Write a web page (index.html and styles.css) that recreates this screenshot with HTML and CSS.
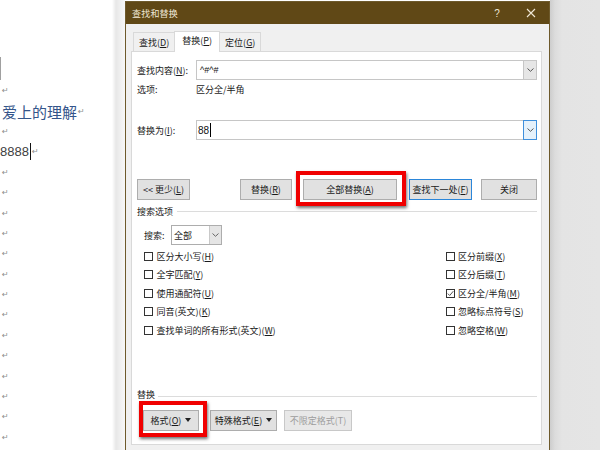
FILE: index.html
```html
<!DOCTYPE html>
<html lang="zh-CN">
<head>
<meta charset="utf-8">
<title>查找和替换</title>
<link rel="stylesheet" href="styles.css">
</head>
<body>
<div class="screen">
  <div class="doc">
    <div class="doc-bar"></div>
    <div class="doc-lines">
      <div class="line"><span class="pm">↵</span></div>
      <div class="line"><span class="kai">爱上的理解</span><span class="pm">↵</span></div>
      <div class="line"><span class="pm">↵</span></div>
      <div class="line"><span class="num">8888</span><span class="caret"></span><span class="pm">↵</span></div>
      <div class="line"><span class="pm">↵</span></div>
      <div class="line"><span class="pm">↵</span></div>
      <div class="line"><span class="pm">↵</span></div>
      <div class="line"><span class="pm">↵</span></div>
      <div class="line"><span class="pm">↵</span></div>
      <div class="line"><span class="pm">↵</span></div>
      <div class="line"><span class="pm">↵</span></div>
      <div class="line"><span class="pm">↵</span></div>
      <div class="line"><span class="pm">↵</span></div>
      <div class="line"><span class="pm">↵</span></div>
      <div class="line"><span class="pm">↵</span></div>
      <div class="line"><span class="pm">↵</span></div>
      <div class="line"><span class="pm">↵</span></div>
      <div class="line"><span class="pm">↵</span></div>
    </div>
  </div>

  <div class="dialog">
    <div class="titlebar">
      <span class="tb-title">查找和替换</span>
      <span class="tb-btn tb-help">?</span>
      <span class="tb-btn"><svg width="10" height="10" viewBox="0 0 10 10"><path d="M1 1 L9 9 M9 1 L1 9" stroke="#efe7d6" stroke-width="1.1" fill="none"/></svg></span>
    </div>
    <div class="dbody">
      <div class="tabs">
        <div class="tab">查找(<u>D</u>)</div>
        <div class="tab active">替换(<u>P</u>)</div>
        <div class="tab">定位(<u>G</u>)</div>
      </div>
      <div class="panel">
        <div class="frow">
          <span class="flabel">查找内容(<u>N</u>):</span>
          <div class="combo">
            <span class="combo-text small">^#^#</span>
            <span class="dd"><svg width="7" height="4" viewBox="0 0 7 4"><path d="M0.5 0.5 L3.5 3.3 L6.5 0.5" stroke="#555" stroke-width="1" fill="none"/></svg></span>
          </div>
        </div>
        <div class="orow">
          <span class="flabel">选项:</span>
          <span>区分全/半角</span>
        </div>
        <div class="frow rrow">
          <span class="flabel">替换为(<u>I</u>):</span>
          <div class="combo">
            <span class="combo-text">88<span class="icaret"></span></span>
            <span class="dd blue"><svg width="7" height="4" viewBox="0 0 7 4"><path d="M0.5 0.5 L3.5 3.3 L6.5 0.5" stroke="#555" stroke-width="1" fill="none"/></svg></span>
          </div>
        </div>

        <div class="brow">
          <button class="btn b-less">&lt;&lt; 更少(<u>L</u>)</button>
          <button class="btn b-rep">替换(<u>R</u>)</button>
          <button class="btn b-all mark1">全部替换(<u>A</u>)</button>
          <button class="btn b-next default">查找下一处(<u>F</u>)</button>
          <button class="btn b-close">关闭</button>
        </div>

        <div class="legend"><span>搜索选项</span><span class="lline"></span></div>

        <div class="srow">
          <span class="slabel">搜索:</span>
          <div class="select">
            <span class="select-text">全部</span>
            <span class="sdd"><svg width="7" height="4" viewBox="0 0 7 4"><path d="M0.5 0.5 L3.5 3.3 L6.5 0.5" stroke="#666" stroke-width="1" fill="none"/></svg></span>
          </div>
        </div>

        <div class="checks">
          <div class="ccol left">
            <div class="chk"><span class="box"></span>区分大小写(<u>H</u>)</div>
            <div class="chk"><span class="box"></span>全字匹配(<u>Y</u>)</div>
            <div class="chk"><span class="box"></span>使用通配符(<u>U</u>)</div>
            <div class="chk"><span class="box"></span>同音(英文)(<u>K</u>)</div>
            <div class="chk"><span class="box"></span>查找单词的所有形式(英文)(<u>W</u>)</div>
          </div>
          <div class="ccol right">
            <div class="chk"><span class="box"></span>区分前缀(<u>X</u>)</div>
            <div class="chk"><span class="box"></span>区分后缀(<u>T</u>)</div>
            <div class="chk"><span class="box"><svg width="7" height="7" viewBox="0 0 7 7"><path d="M0.8 3.6 L2.7 5.5 L6.3 1.2" stroke="#555" stroke-width="1" fill="none"/></svg></span>区分全/半角(<u>M</u>)</div>
            <div class="chk"><span class="box"></span>忽略标点符号(<u>S</u>)</div>
            <div class="chk"><span class="box"></span>忽略空格(<u>W</u>)</div>
          </div>
        </div>

        <div class="legend legend2"><span>替换</span><span class="lline"></span></div>

        <div class="brow2">
          <button class="btn b-fmt mark2">格式(<u>O</u>)<span class="tri"></span></button>
          <button class="btn b-spc">特殊格式(<u>E</u>)<span class="tri"></span></button>
          <button class="btn b-nofmt disabled">不限定格式(T)</button>
        </div>
      </div>
    </div>
  </div>

  <div class="side"></div>
</div>
</body>
</html>
```

FILE: styles.css
```css
* { box-sizing: border-box; }
html, body { margin: 0; padding: 0; }
body {
  width: 600px;
  height: 450px;
  overflow: hidden;
  background: #fff;
  font-family: "Noto Sans CJK SC", "Noto Sans", sans-serif;
}
u { text-decoration: underline; text-underline-offset: 1px; }

.screen {
  display: flex;
  width: 600px;
  height: 450px;
  overflow: hidden;
}

/* ---------- document on the left ---------- */
.doc {
  width: 125px;
  flex-shrink: 0;
  padding-top: 57px;
  background: linear-gradient(to right, #fff 0, #fff 112px, #e7e7e7 116px, #efefef 120px, #f7f7f7 125px);
}
.doc-bar { width: 1px; height: 23px; background: #a0a0a0; }
.doc-lines { margin-top: 0.5px; }
.line {
  height: 20.4px;
  display: flex;
  align-items: center;
  white-space: nowrap;
  padding-left: 1px;
}
.pm {
  font-family: "DejaVu Sans", sans-serif;
  font-size: 8px;
  color: #8c8c8c;
  padding-left: 1px;
}
.kai {
  font-family: "Noto Sans CJK SC", serif;
  font-size: 15px;
  font-weight: 400;
  color: #34558a;
  margin-left: 1px;
}
.num {
  font-family: "Liberation Sans", sans-serif;
  font-size: 13px;
  color: #404040;
  margin-left: -1px;
}
.caret { width: 1px; height: 17px; background: #111; margin-left: 1px; }

/* ---------- dialog ---------- */
.dialog {
  width: 425px;
  flex-shrink: 0;
  height: 470px;
  margin-top: 1px;
  border: 1px solid #6e5a2c;
  border-bottom: none;
  background: #f0f0f0;
  display: flex;
  flex-direction: column;
}
.titlebar {
  height: 22px;
  flex-shrink: 0;
  background: #604816;
  color: #efe7d6;
  display: flex;
  align-items: center;
  padding-left: 6px;
  padding-right: 1px;
  font-size: 9px;
}
.tb-title { flex: 1; letter-spacing: 0.2px; }
.tb-btn {
  width: 34px;
  height: 22px;
  display: flex;
  align-items: center;
  justify-content: center;
}
.tb-help { font-family: "Liberation Sans", sans-serif; font-size: 10px; }

.dbody {
  padding: 7px 7px 0 5px;
  font-size: 9px;
  color: #1a1a1a;
}

.tabs {
  display: flex;
  align-items: flex-end;
  height: 20px;
  margin-left: 2px;
}
.tab {
  height: 19px;
  padding: 3px 5px 0;
  border: 1px solid #d9d9d9;
  border-bottom: none;
  background: #f0f0f0;
  white-space: nowrap;
  margin-right: -1px;
}
.tab.active {
  height: 21px;
  margin-bottom: -1px;
  padding: 2px 7px 0;
  background: #fff;
  position: relative;
  z-index: 1;
}

.panel {
  border: 1px solid #d9d9d9;
  background: #fff;
  padding: 8px 4px 13px 5px;
}

.frow { display: flex; align-items: center; height: 20px; }
.rrow { margin-top: 22px; }
.flabel { width: 59px; flex-shrink: 0; white-space: nowrap; }
.orow { display: flex; align-items: center; height: 18px; }

.combo {
  flex: 1;
  height: 20px;
  border: 1px solid #c6c6c6;
  display: flex;
  align-items: stretch;
}
.combo-text {
  flex: 1;
  display: flex;
  align-items: center;
  padding-left: 1px;
  font-family: "Liberation Sans", sans-serif;
  font-size: 10px;
  color: #111;
}
.combo-text.small { font-size: 9px; padding-left: 3px; }
.icaret { width: 1px; height: 14px; background: #000; margin-left: 1px; }
.dd {
  width: 14px;
  margin: -1px -1px -1px 0;
  border: 1px solid #c6c6c6;
  background: #e6e6e6;
  display: flex;
  align-items: center;
  justify-content: center;
}
.dd.blue { border-color: #3f8fdc; background: #e5f1fb; }

/* buttons */
.btn {
  height: 21px;
  flex-shrink: 0;
  border: 1px solid #adadad;
  background: #e1e1e1;
  font-family: "Noto Sans CJK SC", sans-serif;
  font-size: 9px;
  color: #1a1a1a;
  padding: 0;
  display: flex;
  align-items: center;
  justify-content: center;
  white-space: nowrap;
}
.btn.default { border-color: #2b86d9; }
.btn.disabled { color: #9d9d9d; border-color: #c8c8c8; background: #e8e8e8; }

.brow { display: flex; margin-top: 39px; }
.b-less { width: 53px; }
.b-rep { width: 52px; margin-left: 50px; }
.b-all { width: 94px; margin-left: 11px; }
.b-next { width: 63px; margin-left: 12px; }
.b-close { width: 56px; margin-left: 9px; }

.mark1, .mark2 { position: relative; }
.mark1::after, .mark2::after {
  content: "";
  position: absolute;
  border: 4px solid #f00000;
  box-shadow: 1px 2px 3px rgba(0, 0, 0, 0.55);
  pointer-events: none;
}
.mark1::after { left: -8px; top: -9px; right: -10px; bottom: -7px; }
.mark2::after { left: -5px; top: -10px; right: -9px; bottom: -7px; }

.legend {
  display: flex;
  align-items: center;
  height: 16px;
  margin-top: 3px;
  white-space: nowrap;
}
.lline { flex: 1; height: 1px; background: #dcdcdc; margin-left: 4px; }
.legend2 { margin-top: 47px; }
.legend2 .lline { margin-left: 3px; margin-top: 4px; }

.srow {
  display: flex;
  align-items: center;
  height: 20px;
  margin-top: 6px;
  padding-left: 7px;
}
.slabel { width: 27px; }
.select {
  width: 51px;
  height: 20px;
  border: 1px solid #adadad;
  display: flex;
}
.select-text { flex: 1; display: flex; align-items: center; padding-left: 2px; }
.sdd {
  width: 12px;
  background: #e5e5e5;
  border-left: 1px solid #c9c9c9;
  display: flex;
  align-items: center;
  justify-content: center;
}

.checks { display: flex; margin-top: 2px; padding-left: 7px; }
.ccol.left { width: 301.5px; }
.chk {
  height: 18.5px;
  display: flex;
  align-items: center;
  white-space: nowrap;
}
.box {
  width: 9px;
  height: 9px;
  border: 1px solid #333;
  background: #fff;
  margin-right: 3.5px;
  flex-shrink: 0;
  display: flex;
  align-items: center;
  justify-content: center;
}

.brow2 { display: flex; margin-top: 7px; padding-left: 6px; }
.b-fmt { width: 56px; }
.b-spc { width: 67px; margin-left: 11px; }
.b-nofmt { width: 68px; margin-left: 7px; }
.tri {
  width: 0;
  height: 0;
  border-left: 3px solid transparent;
  border-right: 3px solid transparent;
  border-top: 4px solid #222;
  margin-left: 4px;
}

/* ---------- workspace on the right ---------- */
.side {
  flex: 1;
  background: linear-gradient(to right, #cdcdcd 0, #dcdcdc 5px, #e4e4e4 12px, #e5e5e5 100%);
}
```
